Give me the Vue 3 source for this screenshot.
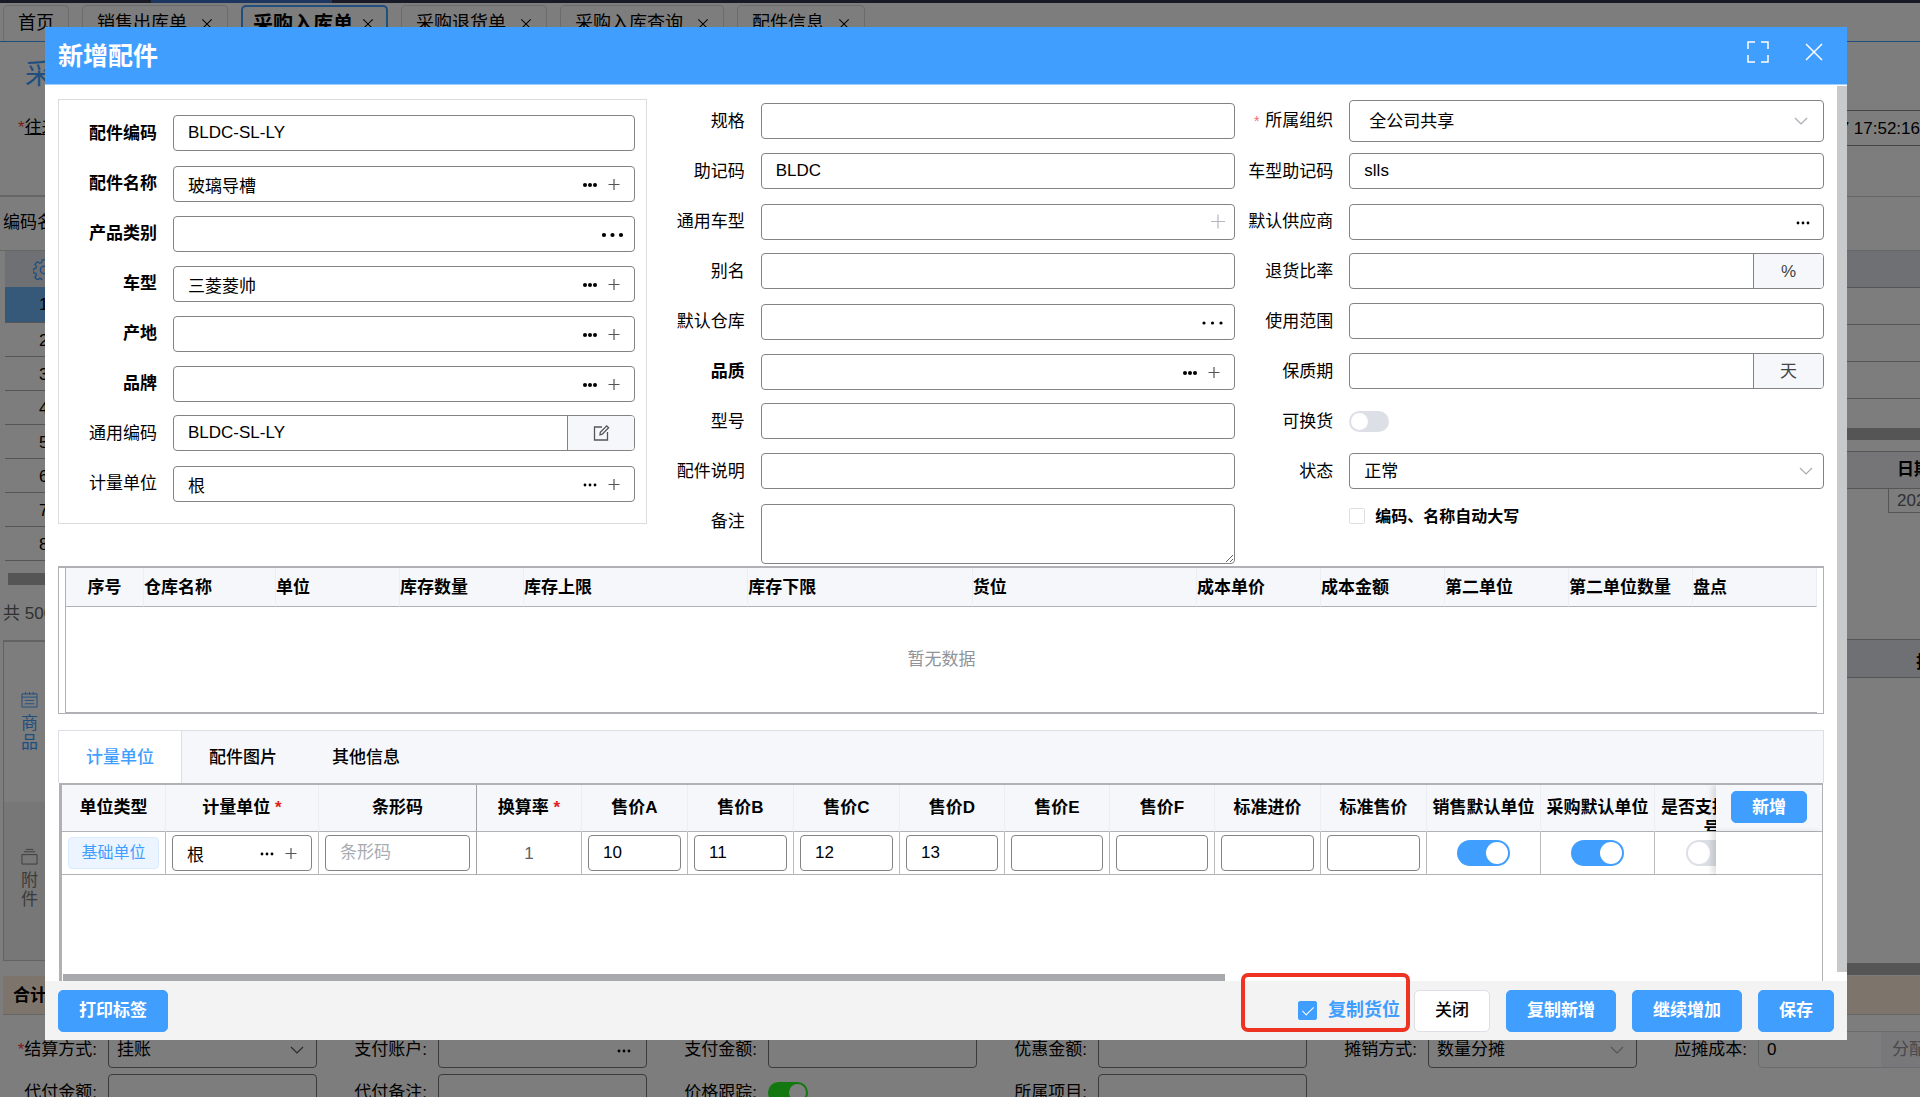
<script setup>
import { ref, reactive } from 'vue'

const pageTabs = [
  { name: '首页', fixed: true },
  { name: '销售出库单' },
  { name: '采购入库单', active: true },
  { name: '采购退货单' },
  { name: '采购入库查询' },
  { name: '配件信息' },
]

const leftFields = reactive([
  { id: 'code', label: '配件编码', value: 'BLDC-SL-LY', bold: true },
  { id: 'name', label: '配件名称', value: '玻璃导槽', bold: true, icons: ['dots-bold', 'plus'] },
  { id: 'category', label: '产品类别', value: '', bold: true, icons: ['dots-wide-bold'] },
  { id: 'model', label: '车型', value: '三菱菱帅', bold: true, icons: ['dots-bold', 'plus'] },
  { id: 'origin', label: '产地', value: '', bold: true, icons: ['dots-bold', 'plus'] },
  { id: 'brand', label: '品牌', value: '', bold: true, icons: ['dots-bold', 'plus'] },
  { id: 'common-code', label: '通用编码', value: 'BLDC-SL-LY', addonIcon: 'edit' },
  { id: 'unit', label: '计量单位', value: '根', icons: ['dots', 'plus'] },
])

const middleFields = reactive([
  { id: 'spec', label: '规格', value: '' },
  { id: 'mnemonic', label: '助记码', value: 'BLDC' },
  { id: 'common-model', label: '通用车型', value: '', icons: ['plus-light'] },
  { id: 'alias', label: '别名', value: '' },
  { id: 'warehouse', label: '默认仓库', value: '', icons: ['dots-wide'] },
  { id: 'quality', label: '品质', value: '', bold: true, icons: ['dots-bold', 'plus'] },
  { id: 'type', label: '型号', value: '' },
  { id: 'desc', label: '配件说明', value: '' },
])

const rightFields = reactive([
  { id: 'org', label: '所属组织', value: '全公司共享', kind: 'select', required: true, tall: true },
  { id: 'model-mnemonic', label: '车型助记码', value: 'slls' },
  { id: 'supplier', label: '默认供应商', value: '', icons: ['dots'] },
  { id: 'return-rate', label: '退货比率', value: '', addon: '%' },
  { id: 'scope', label: '使用范围', value: '' },
  { id: 'shelf-life', label: '保质期', value: '', addon: '天' },
  { id: 'exchange', label: '可换货', value: false, kind: 'switch' },
  { id: 'status', label: '状态', value: '正常', kind: 'select' },
])

const columns = [leftFields, middleFields, rightFields]

const stockColumns = [
  { name: '序号', width: 78 },
  { name: '仓库名称', width: 132 },
  { name: '单位', width: 124 },
  { name: '库存数量', width: 124 },
  { name: '库存上限', width: 0 },
  { name: '库存下限', width: 0 },
  { name: '货位', width: 0 },
  { name: '成本单价', width: 124 },
  { name: '成本金额', width: 124 },
  { name: '第二单位', width: 124 },
  { name: '第二单位数量', width: 124 },
  { name: '盘点', width: 124 },
]

const unitColumns = [
  { name: '单位类型', width: 104 },
  { name: '计量单位', width: 153, required: true },
  { name: '条形码', width: 158, strong: true },
  { name: '换算率', width: 105, required: true },
  { name: '售价A', width: 106 },
  { name: '售价B', width: 106 },
  { name: '售价C', width: 106 },
  { name: '售价D', width: 105 },
  { name: '售价E', width: 105 },
  { name: '售价F', width: 105 },
  { name: '标准进价', width: 106 },
  { name: '标准售价', width: 106 },
  { name: '销售默认单位', width: 114 },
  { name: '采购默认单位', width: 114 },
  { name: '是否支持序列号', width: 115 },
]

const prices = reactive([
  { name: '售价A', value: '10' },
  { name: '售价B', value: '11' },
  { name: '售价C', value: '12' },
  { name: '售价D', value: '13' },
  { name: '售价E', value: '' },
  { name: '售价F', value: '' },
  { name: '标准进价', value: '' },
  { name: '标准售价', value: '' },
])

const detailTabs = ['计量单位', '配件图片', '其他信息']
const currentTab = ref('计量单位')
const rowUnit = ref('根')
const barcode = ref('')
const saleDefault = ref(true)
const purchaseDefault = ref(true)
const serialSupport = ref(false)
const remark = ref('')
const upperCase = ref(false)
const copyLocation = ref(true)

const payRows = [
  [
    { label: '结算方式:', kind: 'select', value: '挂账', required: true },
    { label: '支付账户:', kind: 'lookup', value: '' },
    { label: '支付金额:', value: '' },
    { label: '优惠金额:', value: '' },
    { label: '摊销方式:', kind: 'select', value: '数量分摊', light: true },
    { label: '应摊成本:', kind: 'action', value: '0' },
  ],
  [
    { label: '代付金额:', value: '' },
    { label: '代付备注:', value: '' },
    { label: '价格跟踪:', kind: 'switch', value: true },
    { label: '所属项目:', value: '' },
  ],
]
</script>

<template>
  <div class="screen">
    <svg class="sprite" aria-hidden="true">
      <symbol id="dots" viewBox="0 0 24 24"><circle cx="7" cy="13" r="1.4" /><circle cx="12" cy="13" r="1.4" /><circle cx="17" cy="13" r="1.4" /></symbol>
      <symbol id="dots-bold" viewBox="0 0 24 24"><circle cx="7" cy="13" r="2" /><circle cx="12" cy="13" r="2" /><circle cx="17" cy="13" r="2" /></symbol>
      <symbol id="dots-wide" viewBox="0 0 24 24"><circle cx="2" cy="13" r="1.6" /><circle cx="10.5" cy="13" r="1.6" /><circle cx="19" cy="13" r="1.6" /></symbol>
      <symbol id="dots-wide-bold" viewBox="0 0 24 24"><circle cx="2" cy="13" r="2.1" /><circle cx="10.5" cy="13" r="2.1" /><circle cx="19" cy="13" r="2.1" /></symbol>
      <symbol id="plus" viewBox="0 0 24 24"><path d="M6.500 12.500h11M12 7v11" fill="none" stroke="#555" stroke-width="1.200" /></symbol>
      <symbol id="plus-light" viewBox="0 0 24 24"><path d="M9 11.500h14M16 4.500v14" fill="none" stroke="#b4b7bd" stroke-width="1.200" /></symbol>
      <symbol id="edit" viewBox="0 0 24 24"><path d="M13 6H5.500v13h13v-8M11 13.800l.3-2.600 6.400-6.400 1.900 1.900-6.300 6.500z" fill="none" stroke="#555" stroke-width="1.300" /></symbol>
      <symbol id="chevron" viewBox="0 0 14 14"><path d="M1 4l6 6 6-6" fill="none" stroke="currentColor" stroke-width="1.200" /></symbol>
      <symbol id="cross" viewBox="0 0 14 14"><path d="M1.500 1.500l11 11M12.500 1.500l-11 11" fill="none" stroke="currentColor" stroke-width="1.200" /></symbol>
    </svg>

    <!-- purchase order page behind the dialog -->
    <div class="page">
      <div class="topbar"><span></span></div>
      <nav class="page-tabs">
        <a v-for="t in pageTabs" :key="t.name" href="#" :class="{ active: t.active }">
          {{ t.name }}
          <svg v-if="!t.fixed"><use href="#cross" /></svg>
        </a>
      </nav>
      <div class="page-main">
        <div class="pane-left">
          <div class="order-title">采购入库单</div>
          <div class="order-party"><i>*</i><a href="#">往来单位</a></div>
          <div class="search-label">编码名称</div>
          <div class="list-head">
            <svg viewBox="0 0 24 24"><path d="M10 2h4l.7 3 1.800.8 2.600-1.700 2.800 2.800-1.700 2.600.8 1.800 3 .7v4l-3 .7-.8 1.800 1.700 2.600-2.800 2.800-2.600-1.700-1.800.8-.7 3h-4l-.7-3-1.800-.8-2.600 1.700-2.800-2.800 1.700-2.600-.8-1.800-3-.7v-4l3-.7.8-1.800L2.100 6.900l2.800-2.800 2.600 1.700L9.300 5z" /><circle cx="12" cy="13" r="4" /></svg>
          </div>
          <div v-for="n in 8" :key="n" class="list-row" :class="{ picked: n === 1 }">{{ n }}</div>
          <div class="list-scroll"></div>
          <div class="list-total">共 500 条</div>
          <div class="side-tabs">
            <a href="#" class="side-tab on">
              <svg viewBox="0 0 18 18"><path d="M1 3h16v14H1zM1 6.500h16M5 1v3M9 1v3M13 1v3M4 10h10M4 13.500h10" /></svg>商品
            </a>
            <a href="#" class="side-tab">
              <svg viewBox="0 0 18 18"><path d="M1 7h16v10H1zM3 4h12M5 1.500h8" /></svg>附件
            </a>
          </div>
        </div>
        <div class="pane-right">
          <div class="r-date">7 17:52:16</div>
          <div class="r-line"></div>
          <div class="r-line"></div>
          <div class="r-head"></div>
          <div v-for="n in 3" :key="n" class="r-row"></div>
          <div class="r-bar"></div>
          <div class="r-history-head">日期</div>
          <div class="r-history-row">2023</div>
          <div class="r-band">折扣</div>
          <div class="r-bar low"></div>
        </div>
      </div>
      <div class="sum-row">合计</div>
      <div class="pay-form">
        <div v-for="(row, r) in payRows" :key="r" class="pay-row">
          <div v-for="f in row" :key="f.label" class="pay-item">
            <label :for="'pay-' + f.label"><i v-if="f.required">*</i>{{ f.label }}</label>
            <input v-if="f.kind === 'switch'" :id="'pay-' + f.label" type="checkbox" class="switch green" checked />
            <div v-else class="pay-box" :class="{ action: f.kind === 'action' }">
              <select v-if="f.kind === 'select'" :id="'pay-' + f.label"><option>{{ f.value }}</option></select>
              <input v-else :id="'pay-' + f.label" type="text" :value="f.value" />
              <svg v-if="f.kind === 'select'" class="chev" :class="{ light: f.light }"><use href="#chevron" /></svg>
              <svg v-if="f.kind === 'lookup'" class="ico"><use href="#dots" /></svg>
              <button v-if="f.kind === 'action'" type="button">分配</button>
            </div>
          </div>
        </div>
      </div>
    </div>

    <div class="mask">
      <section class="dialog" role="dialog" aria-label="新增配件">
        <header class="dialog-head">
          <h1>新增配件</h1>
          <div class="head-tools">
            <button type="button" aria-label="全屏">
              <svg width="22" height="22" viewBox="0 0 22 22"><path d="M1 8V1h7M14 1h7v7M21 14v7h-7M8 21H1v-7" /></svg>
            </button>
            <button type="button" aria-label="关闭窗口">
              <svg width="18" height="18" viewBox="0 0 18 18"><path d="M1 1l16 16M17 1L1 17" /></svg>
            </button>
          </div>
        </header>

        <div class="dialog-body">
          <div class="content">
            <form class="form-grid" @submit.prevent>
              <div v-for="(col, c) in columns" :key="c" class="form-col" :class="{ boxed: c === 0 }">
                <div v-for="f in col" :key="f.id" class="field">
                  <label :for="f.id" :class="{ bold: f.bold }"><i v-if="f.required">*</i>{{ f.label }}</label>
                  <input v-if="f.kind === 'switch'" :id="f.id" v-model="f.value" type="checkbox" class="switch" />
                  <div v-else-if="f.kind === 'select'" class="box" :class="{ tall: f.tall }">
                    <select :id="f.id" v-model="f.value"><option>{{ f.value }}</option></select>
                    <svg class="chev light"><use href="#chevron" /></svg>
                  </div>
                  <div v-else class="box" :class="{ lookup: f.icons }">
                    <input :id="f.id" v-model="f.value" type="text" />
                    <button v-for="i in f.icons" :key="i" type="button" class="ico-btn" :aria-label="f.label">
                      <svg class="ico"><use :href="'#' + i" /></svg>
                    </button>
                    <span v-if="f.addon" class="addon">{{ f.addon }}</span>
                    <button v-if="f.addonIcon" type="button" class="addon" aria-label="编辑">
                      <svg class="ico"><use :href="'#' + f.addonIcon" /></svg>
                    </button>
                  </div>
                </div>
                <div v-if="c === 1" class="field remark">
                  <label for="remark">备注</label>
                  <textarea id="remark" v-model="remark"></textarea>
                </div>
                <div v-if="c === 2" class="upper">
                  <input id="upper" v-model="upperCase" type="checkbox" class="check" />
                  <label for="upper">编码、名称自动大写</label>
                </div>
              </div>
            </form>

            <div class="stock">
              <div class="stock-inner">
                <table>
                  <colgroup>
                    <col v-for="s in stockColumns" :key="s.name" :style="s.width ? { width: s.width + 'px' } : null" />
                  </colgroup>
                  <thead>
                    <tr><th v-for="s in stockColumns" :key="s.name">{{ s.name }}</th></tr>
                  </thead>
                  <tbody>
                    <tr><td :colspan="stockColumns.length">暂无数据</td></tr>
                  </tbody>
                </table>
              </div>
            </div>

            <div class="detail-tabs">
              <button v-for="t in detailTabs" :key="t" type="button" :class="{ on: t === currentTab }" @click="currentTab = t">{{ t }}</button>
            </div>

            <div class="units">
              <div class="units-scroll">
                <table>
                  <colgroup>
                    <col v-for="u in unitColumns" :key="u.name" :style="{ width: u.width + 'px' }" />
                    <col class="col-op" />
                  </colgroup>
                  <thead>
                    <tr>
                      <th v-for="u in unitColumns" :key="u.name" :class="{ strong: u.strong }">
                        <div>{{ u.name }}<i v-if="u.required"> *</i></div>
                      </th>
                      <th class="op"><button type="button" class="primary small">新增</button></th>
                    </tr>
                  </thead>
                  <tbody>
                    <tr>
                      <td><span class="tag">基础单位</span></td>
                      <td>
                        <div class="box">
                          <input v-model="rowUnit" type="text" aria-label="计量单位" />
                          <button type="button" class="ico-btn" aria-label="选择单位"><svg class="ico"><use href="#dots" /></svg></button>
                          <button type="button" class="ico-btn" aria-label="添加单位"><svg class="ico"><use href="#plus" /></svg></button>
                        </div>
                      </td>
                      <td class="strong"><div class="box"><input v-model="barcode" type="text" placeholder="条形码" aria-label="条形码" /></div></td>
                      <td class="rate">1</td>
                      <td v-for="p in prices" :key="p.name">
                        <div class="box"><input v-model="p.value" type="text" :aria-label="p.name" /></div>
                      </td>
                      <td><input v-model="saleDefault" type="checkbox" class="switch big" aria-label="销售默认单位" /></td>
                      <td><input v-model="purchaseDefault" type="checkbox" class="switch big" aria-label="采购默认单位" /></td>
                      <td><input v-model="serialSupport" type="checkbox" class="switch big" aria-label="是否支持序列号" /></td>
                      <td class="op"></td>
                    </tr>
                  </tbody>
                </table>
              </div>
              <div class="h-thumb"></div>
            </div>
          </div>
          <div class="v-thumb"></div>
        </div>

        <footer class="dialog-foot">
          <button type="button" class="primary">打印标签</button>
          <div class="foot-right">
            <div class="copy">
              <input id="copy" v-model="copyLocation" type="checkbox" class="check blue" />
              <label for="copy">复制货位</label>
            </div>
            <div class="actions">
              <button type="button" class="plain">关闭</button>
              <button type="button" class="primary">复制新增</button>
              <button type="button" class="primary">继续增加</button>
              <button type="button" class="primary">保存</button>
            </div>
          </div>
        </footer>
      </section>
    </div>
  </div>
</template>

<style>
html,
body {
  margin: 0;
  overflow: hidden;
}
</style>

<style scoped>
* {
  box-sizing: border-box;
}
.screen {
  position: relative;
  height: 100vh;
  overflow: hidden;
  background: #fafafa;
  color: #000;
  font: 17px/21px "Liberation Sans", "Noto Sans CJK SC", sans-serif;
}
.sprite {
  position: absolute;
  width: 0;
  height: 0;
}
input,
select,
textarea,
button {
  margin: 0;
  padding: 0;
  border: 0;
  background: none;
  color: inherit;
  font: inherit;
  outline: none;
}
a {
  color: inherit;
  text-decoration: none;
}
i {
  font-style: normal;
}

/* page behind */
.topbar {
  height: 3px;
  padding-left: 151px;
  background: #30364a;
}
.topbar span {
  display: block;
  width: 181px;
  height: 3px;
  background: #3a6cc0;
}
.page-tabs {
  display: flex;
  gap: 13px;
  height: 39px;
  padding: 2px 3px 0;
  border-bottom: 1px solid #409eff;
}
.page-tabs a {
  display: flex;
  align-items: center;
  gap: 14px;
  padding: 0 14px;
  border: 1px solid #d4d7de;
  border-bottom: 0;
  border-radius: 5px 5px 0 0;
  font-size: 18px;
}
.page-tabs a.active {
  gap: 9px;
  padding: 0 12px 0 10px;
  border: 2px solid #409eff;
  border-bottom: 0;
  font-size: 20px;
  font-weight: bold;
}
.page-tabs svg {
  width: 12px;
  height: 12px;
}
.page-main {
  display: flex;
  justify-content: space-between;
  height: 934px;
}
.pane-left {
  width: 300px;
}
.order-title {
  height: 66px;
  padding-left: 25px;
  color: #409eff;
  font-size: 28px;
  line-height: 66px;
}
.order-party {
  display: flex;
  height: 89px;
  padding: 9px 0 0 18px;
  border-bottom: 2px solid #ccc;
}
.order-party i,
.pay-item i {
  color: #f33;
}
.order-party a {
  text-decoration: underline;
}
.search-label {
  height: 54px;
  padding-left: 3px;
  border-bottom: 1px solid #ccc;
  line-height: 52px;
}
.list-head {
  height: 36px;
  margin-left: 5px;
  padding: 7px 0 0 28px;
  background: #dfe1e6;
}
.list-head svg {
  width: 22px;
  height: 22px;
  fill: none;
  stroke: #409eff;
  stroke-width: 1.5;
}
.list-row {
  height: 34px;
  margin-left: 5px;
  padding-left: 34px;
  border-bottom: 1px solid #aaa;
  line-height: 36px;
}
.list-row.picked {
  height: 36px;
  background: #6cb2f4;
}
.list-scroll {
  height: 12px;
  margin: 12px 0 0 8px;
  background: #aaa;
}
.list-total {
  height: 55px;
  padding-left: 3px;
  color: #606266;
  line-height: 58px;
}
.side-tabs {
  margin-left: 3px;
  border: 2px solid #c4c6ca;
  border-width: 2px 0 1px 1px;
}
.side-tab {
  display: flex;
  flex-direction: column;
  width: 41px;
  height: 158px;
  padding: 46px 7px 0 17px;
  background: #eee;
  color: #777;
  line-height: 19px;
}
.side-tab.on {
  height: 160px;
  padding-top: 49px;
  background: none;
  color: #409eff;
}
.side-tab svg {
  flex: none;
  width: 17px;
  height: 17px;
  margin-bottom: 6px;
  fill: none;
  stroke: currentColor;
}
.pane-right {
  width: 73px;
  overflow: hidden;
}
.r-date {
  display: flex;
  justify-content: flex-end;
  height: 36px;
  margin-top: 68px;
  border: 1px solid #888;
  border-width: 1px 0;
  line-height: 36px;
  white-space: nowrap;
}
.r-line {
  height: 51px;
  border-bottom: 1px solid #ccc;
}
.r-line + .r-line {
  height: 54px;
}
.r-head {
  height: 37px;
  background: #dfe1e6;
  border-bottom: 1px solid #aaa;
}
.r-row {
  height: 37px;
  border-bottom: 1px solid #aaa;
}
.r-bar {
  height: 12px;
  margin-top: 29px;
  background: #aaa;
}
.r-history-head {
  height: 38px;
  margin-top: 11px;
  padding-left: 50px;
  border: 1px solid #aaa;
  border-width: 1px 0;
  background: #eaebee;
  font-weight: bold;
  line-height: 36px;
  white-space: nowrap;
}
.r-history-row {
  height: 24px;
  padding-left: 8px;
  margin-left: 41px;
  border-left: 1px solid #aaa;
  border-bottom: 1px solid #aaa;
  color: #606266;
  line-height: 24px;
}
.r-band {
  height: 39px;
  margin-top: 126px;
  padding-left: 69px;
  border: 1px solid #aaa;
  border-width: 1px 0;
  background: #dfe1e6;
  font-weight: bold;
  line-height: 46px;
  white-space: nowrap;
}
.r-bar.low {
  margin-top: 285px;
}
.sum-row {
  height: 39px;
  padding-left: 10px;
  margin-left: 3px;
  background: #faebd7;
  border-bottom: 1px solid #ccc;
  font-weight: bold;
  line-height: 40px;
}
.pay-form {
  display: flex;
  flex-direction: column;
  gap: 6px;
  padding-top: 16px;
}
.pay-row {
  display: flex;
}
.pay-item {
  display: flex;
  flex: none;
  align-items: center;
  width: 330px;
}
.pay-item label {
  width: 97px;
  margin-right: 11px;
  text-align: right;
}
.pay-box {
  display: flex;
  flex: none;
  align-items: center;
  width: 209px;
  height: 37px;
  padding: 0 10px 0 8px;
  border: 1px solid #777;
  border-radius: 4px;
}
.pay-box input,
.pay-box select {
  flex: 1;
  min-width: 0;
  appearance: none;
}
.pay-box.action {
  padding-right: 0;
  border-color: #d5d7dc;
}
.pay-box.action button {
  width: 85px;
  height: 35px;
  padding-left: 11px;
  background: #f0f1f4;
  color: #909399;
  text-align: left;
}

/* shared controls */
.ico {
  display: block;
  width: 24px;
  height: 24px;
}
.chev {
  flex: none;
  width: 14px;
  height: 14px;
  margin-right: 2px;
  color: #555;
}
.chev.light {
  color: #a8abb2;
}
.box {
  display: flex;
  flex: 1;
  align-items: center;
  height: 36px;
  padding-right: 8px;
  border: 1px solid #838383;
  border-radius: 4px;
  background: #fff;
}
.box.tall {
  height: 42px;
  padding-left: 5px;
  padding-right: 13px;
}
.box input,
.box select {
  flex: 1;
  min-width: 0;
  height: 100%;
  padding-left: 14px;
  appearance: none;
}
.box input::placeholder {
  color: #a8abb2;
}
.ico-btn {
  width: 24px;
  height: 24px;
}
.addon {
  display: flex;
  align-items: center;
  justify-content: center;
  width: 70px;
  height: 34px;
  margin-right: -8px;
  border-left: 1px solid #838383;
  border-radius: 0 3px 3px 0;
  background: #f5f7fa;
  color: #444;
}
button.addon {
  width: 67px;
}
.switch {
  position: relative;
  width: 40px;
  height: 21px;
  border-radius: 11px;
  background: #dcdfe6;
  appearance: none;
}
.switch::before {
  content: "";
  position: absolute;
  top: 2px;
  left: 2px;
  width: 17px;
  height: 17px;
  border-radius: 50%;
  background: #fff;
}
.switch:checked {
  background: #409eff;
}
.switch:checked::before {
  left: auto;
  right: 2px;
}
.switch.green {
  background: #28f020;
}
.switch.big {
  display: block;
  width: 53px;
  height: 26px;
  margin: 0 auto;
  border-radius: 13px;
}
.switch.big::before {
  width: 22px;
  height: 22px;
}
.check {
  flex: none;
  width: 16px;
  height: 16px;
  border: 1px solid #dcdfe6;
  border-radius: 2px;
  background: #fff;
  appearance: none;
}
.check:checked {
  position: relative;
  border-color: #409eff;
  background: #409eff;
}
.check:checked::after {
  content: "";
  position: absolute;
  top: 2px;
  left: 6px;
  width: 5px;
  height: 10px;
  border: 1px solid #fff;
  border-width: 0 1px 1px 0;
  transform: rotate(45deg);
}
.primary,
.plain {
  height: 42px;
  padding: 0 20px;
  border: 1px solid #409eff;
  border-radius: 5px;
  background: #409eff;
  color: #fff;
  font-weight: bold;
}
.primary.small {
  display: block;
  height: 32px;
  margin: 0 auto;
}
.plain {
  border-color: #dcdfe6;
  background: #fff;
  color: #000;
  font-weight: 500;
}

/* dialog */
.mask {
  position: absolute;
  inset: 0;
  padding: 27px 73px 0 45px;
  background: rgba(0, 0, 0, 0.5);
}
.dialog {
  background: #fff;
}
.dialog-head {
  display: flex;
  align-items: center;
  justify-content: space-between;
  height: 58px;
  padding: 0 24px 0 13px;
  border-bottom: 1px solid #a0cfff;
  background: #409eff;
  color: #fff;
}
.dialog-head h1 {
  margin: 0;
  font-size: 25px;
  line-height: 34px;
}
.head-tools {
  display: flex;
  align-items: center;
  gap: 36px;
  padding-bottom: 8px;
}
.head-tools svg {
  display: block;
  fill: none;
  stroke: #fff;
  stroke-width: 1.5;
}
.dialog-body {
  display: flex;
}
.content {
  flex: 1;
  min-width: 0;
  padding: 11px 13px 0;
}
.v-thumb {
  width: 10px;
  margin: 1px 0 9px;
  background: #c8c9cb;
}
.form-grid {
  display: grid;
  grid-template-columns: 1fr 1fr 1fr;
  align-items: start;
}
.form-col.boxed {
  margin-top: 3px;
  padding: 8px 11px 15px 0;
  border: 1px solid #dcdcdc;
}
.field {
  display: flex;
  align-items: center;
  height: 50px;
}
.field label {
  width: 114px;
  padding-right: 16px;
  text-align: right;
  white-space: nowrap;
}
.field label.bold {
  font-weight: bold;
}
.field label i {
  margin-right: 6px;
  color: #f56c6c;
  font-size: 14px;
}
.box.lookup {
  margin-top: 2px;
}
.field.remark {
  align-items: flex-start;
  height: 70px;
  padding-top: 8px;
}
.field.remark label {
  line-height: 36px;
}
.field.remark textarea {
  flex: 1;
  height: 60px;
  padding: 6px 15px;
  border: 1px solid #838383;
  border-radius: 4px;
  resize: vertical;
}
.upper {
  display: flex;
  align-items: center;
  gap: 10px;
  height: 40px;
  padding-left: 114px;
  font-size: 16px;
  font-weight: bold;
}

.stock {
  padding: 0 6px;
  border: 1px solid #b0b1b4;
  border-top-width: 2px;
}
.stock-inner {
  border: 1px solid #b0b1b4;
  border-width: 0 0 1px 1px;
}
.stock table,
.units table {
  width: 100%;
  table-layout: fixed;
  border-spacing: 0;
}
.stock th {
  height: 39px;
  padding: 0;
  border-bottom: 1px solid #b0b1b4;
  border-right: 1px solid #ebeef5;
  background: #f5f7fa;
  text-align: left;
  white-space: nowrap;
}
.stock th:first-child {
  text-align: center;
}
.stock td {
  height: 105px;
  padding: 0;
  color: #909399;
  text-align: center;
}

.detail-tabs {
  display: flex;
  height: 53px;
  margin-top: 16px;
  border: 1px solid #dcdfe6;
  border-bottom: 0;
  background: #f5f7fa;
}
.detail-tabs button {
  padding: 0 27px;
  border-right: 1px solid transparent;
  font-weight: 500;
}
.detail-tabs button.on {
  border-color: #dcdfe6;
  background: #fff;
  color: #409eff;
}

.units {
  display: flex;
  flex-direction: column;
  justify-content: space-between;
  height: 198px;
  margin: 0 1px;
  border: 1px solid #b0b1b4;
  border-width: 2px 1px 0 3px;
}
.units-scroll {
  overflow: hidden;
}
.units table {
  width: 1814px;
}
.col-op {
  width: 106px;
}
.units th {
  height: 47px;
  padding: 0;
  border-right: 1px solid #ebeef5;
  border-bottom: 1px solid #b0b1b4;
  background: #f5f7fa;
  vertical-align: top;
}
.units th div {
  height: 46px;
  padding: 12px 5px 0;
  overflow: hidden;
}
.units th i {
  color: #e02020;
}
.units td {
  height: 43px;
  padding: 0 6px;
  border-right: 1px solid #b8babd;
  border-bottom: 1px solid #b0b1b4;
  text-align: center;
}
.units .strong {
  border-right: 1px solid #a0a2a6;
}
.units td.rate {
  color: #606266;
}
.units .op {
  position: sticky;
  right: 0;
  border-right: 0;
  background: #fff;
  box-shadow: -4px 0 6px rgba(0, 0, 0, 0.12);
}
.units th.op {
  padding-top: 6px;
  background: #f5f7fa;
}
.tag {
  display: block;
  height: 32px;
  border: 1px solid #d9ecff;
  border-radius: 4px;
  background: #ecf5ff;
  color: #409eff;
  font-size: 16px;
  line-height: 30px;
  white-space: nowrap;
}
.h-thumb {
  width: 66%;
  height: 7px;
  margin-left: 1px;
  background: #a8a9ac;
}

.dialog-foot {
  display: flex;
  align-items: center;
  justify-content: space-between;
  height: 59px;
  padding: 0 13px;
  background: #f3f3f3;
}
.foot-right,
.actions {
  display: flex;
  align-items: center;
}
.foot-right {
  gap: 4px;
}
.actions {
  gap: 16px;
}
.copy {
  position: relative;
  display: flex;
  align-items: center;
  gap: 11px;
  height: 42px;
  padding: 0 10px 0 57px;
  color: #409eff;
  font-size: 18px;
  font-weight: bold;
}
.copy::before {
  content: "";
  position: absolute;
  inset: -17px 0 0;
  border: 4px solid #ee3322;
  border-radius: 7px;
  pointer-events: none;
}
.check.blue {
  width: 19px;
  height: 19px;
}
</style>
